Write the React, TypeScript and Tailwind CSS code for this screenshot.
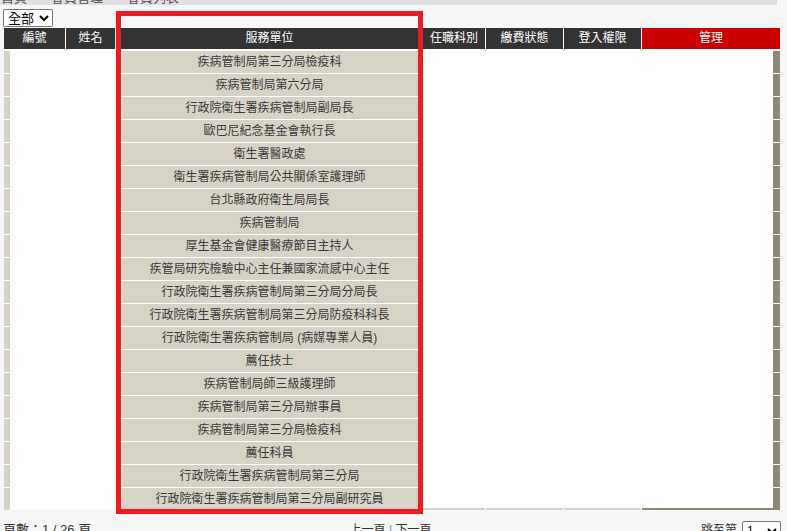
import React from "react";

const units = [
  "疾病管制局第三分局檢疫科",
  "疾病管制局第六分局",
  "行政院衛生署疾病管制局副局長",
  "歐巴尼紀念基金會執行長",
  "衛生署醫政處",
  "衛生署疾病管制局公共關係室護理師",
  "台北縣政府衛生局局長",
  "疾病管制局",
  "厚生基金會健康醫療節目主持人",
  "疾管局研究檢驗中心主任兼國家流感中心主任",
  "行政院衛生署疾病管制局第三分局分局長",
  "行政院衛生署疾病管制局第三分局防疫科科長",
  "行政院衛生署疾病管制局 (病媒專業人員)",
  "薦任技士",
  "疾病管制局師三級護理師",
  "疾病管制局第三分局辦事員",
  "疾病管制局第三分局檢疫科",
  "薦任科員",
  "行政院衛生署疾病管制局第三分局",
  "行政院衛生署疾病管制局第三分局副研究員",
];

export default function App() {
  return (
    <div className="relative h-[531px] w-[787px] overflow-hidden bg-[#f7f7f7] font-['Liberation_Sans','Noto_Sans_CJK_TC',sans-serif] text-[12px] text-[#333]">
      {/* breadcrumb bar, scrolled mostly out of view */}
      <div className="flex h-[5px] w-[777px] items-end overflow-hidden bg-[#e0e0e0]">
        <div className="mb-[4px] flex gap-[24px] pl-[1px] text-[13px] leading-[6px] text-[#555]">
          <span>首頁</span>
          <span>會員管理</span>
          <span>會員列表</span>
        </div>
      </div>

      <select className="ml-[3px] mt-[4px] block h-[18px] w-[50px] rounded-[2px] border border-[#767676] bg-white text-[13px] leading-[16px] text-black">
        <option>全部</option>
      </select>

      <div className="ml-[4px] mt-[1px] w-[776px]">
        <div className="flex h-[21px] text-center leading-[21px] text-white">
          <div className="w-[62px] border-r border-white bg-[#333]">編號</div>
          <div className="w-[50px] border-r border-white bg-[#333]">姓名</div>
          <div className="w-[307px] bg-[#333]">服務單位</div>
          <div className="w-[63px] border-r border-white bg-[#333]">任職科別</div>
          <div className="w-[78px] border-r border-white bg-[#333]">繳費狀態</div>
          <div className="w-[78px] border-r border-white bg-[#333]">登入權限</div>
          <div className="w-[138px] bg-[#cc0000]">管理</div>
        </div>

        <div className="flex h-[461px] bg-white pt-px">
          <div className="flex w-[6px] flex-col">
            {units.map((_, i) => (
              <div key={i} className="h-[23px] border-t border-white bg-[#d6d3c6]" />
            ))}
          </div>
          <div className="w-[106px] bg-white" />
          <div className="flex w-[307px] flex-col">
            {units.map((u, i) => (
              <div
                key={i}
                className="h-[23px] border-t border-white bg-[#d6d3c6] text-center leading-[22px] text-[#3a3a3a]"
              >
                {u}
              </div>
            ))}
          </div>
          <div className="flex w-[350px] flex-col">
            <div className="h-[458px] bg-white" />
            <div className="flex h-[2px]">
              <div className="w-[63px] border-r border-white bg-[#d6d3c6]" />
              <div className="w-[78px] border-r border-white bg-[#d6d3c6]" />
              <div className="w-[78px] border-r border-white bg-[#d6d3c6]" />
              <div className="w-[131px] bg-[#8b8878]" />
            </div>
          </div>
          <div className="flex w-[7px] flex-col">
            {units.map((_, i) => (
              <div key={i} className="h-[23px] border-t border-white bg-[#8b8878]" />
            ))}
          </div>
        </div>
      </div>

      <div className="mt-[10px] grid w-[781px] grid-cols-3 items-start text-[12px] leading-[20px] text-[#333]">
        <div className="pl-[3px] text-[13px]">頁數：1 / 26 頁</div>
        <div className="justify-self-center">
          上一頁 <span className="text-[#6a8fc9]">|</span> 下一頁
        </div>
        <div className="flex items-start justify-self-end">
          <span>跳至第</span>
          <select className="ml-[5px] mt-[1px] h-[20px] w-[39px] rounded-[2px] border border-[#767676] bg-white text-[12px] text-black">
            <option>1</option>
          </select>
        </div>
      </div>

      {/* annotation highlight */}
      <div className="absolute left-[116px] top-[11px] h-[503px] w-[307px] border-[5px] border-[#ed1c24]" />
    </div>
  );
}
